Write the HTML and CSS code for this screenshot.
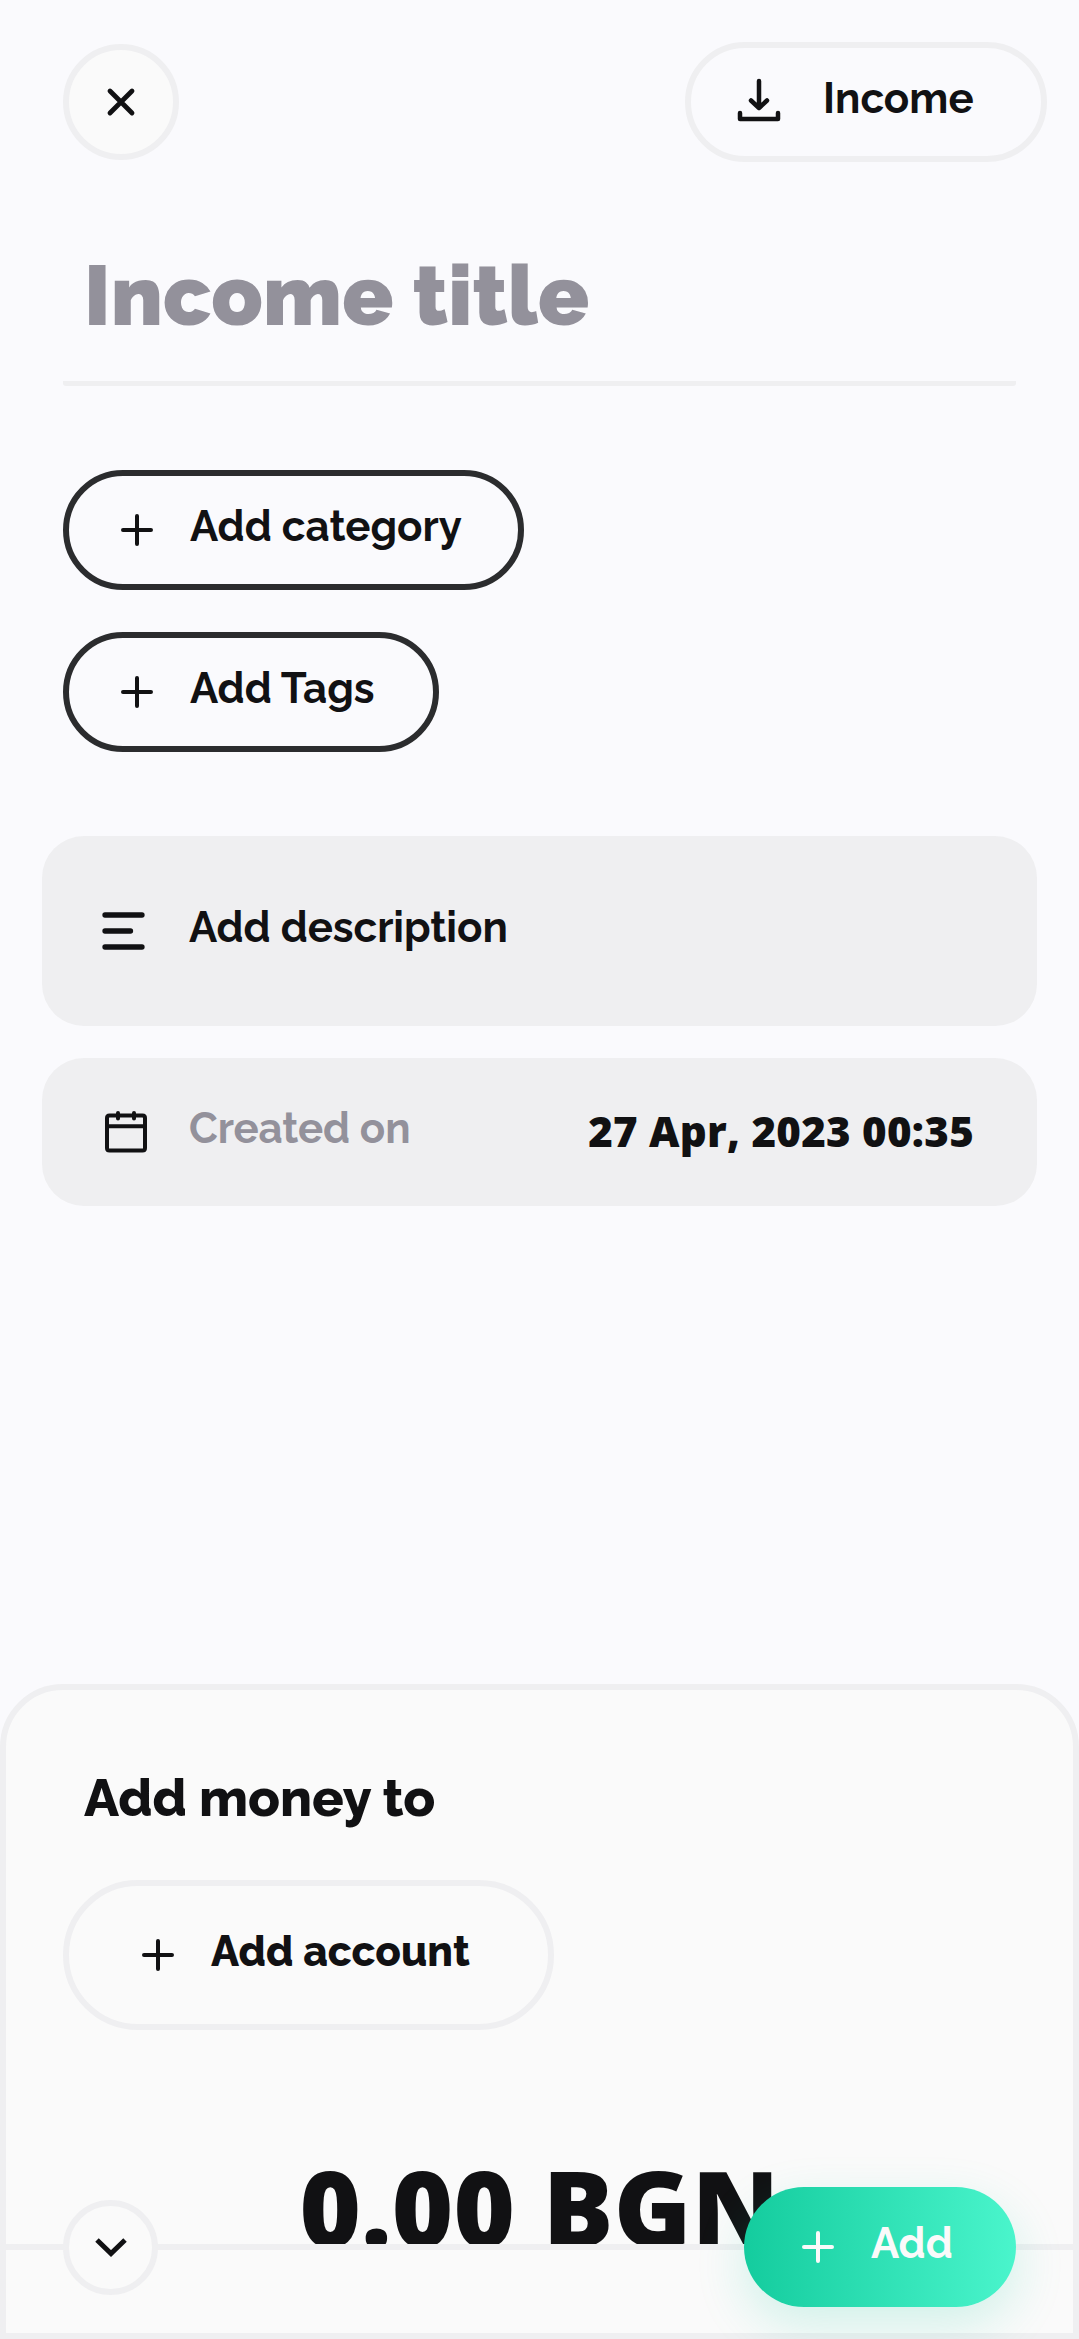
FILE: index.html
```html
<!DOCTYPE html>
<html lang="en">
<head>
<meta charset="utf-8">
<title>Income</title>
<link rel="stylesheet" href="styles.css">
</head>
<body>
<main class="screen">
  <header class="toolbar">
    <button class="round close" aria-label="Close">
      <svg width="40" height="40" viewBox="0 0 40 40"><path d="M9 9L31 31M31 9L9 31"/></svg>
    </button>
    <button class="pill type">
      <svg width="44" height="44" viewBox="0 0 44 44"><path d="M22 3V30M14 22.500L22 30L30 22.500M3 35V41H41V35"/></svg>
      <span class="label">Income</span>
    </button>
  </header>

  <h1 class="title">Income title</h1>

  <section class="chips">
    <button class="pill chip">
      <svg width="32" height="32" viewBox="0 0 32 32"><path d="M2 16H30M16 2V30"/></svg>
      <span class="label">Add category</span>
    </button>
    <button class="pill chip chip-tags">
      <svg width="32" height="32" viewBox="0 0 32 32"><path d="M2 16H30M16 2V30"/></svg>
      <span class="label">Add Tags</span>
    </button>
  </section>

  <section class="cards">
    <div class="card card-description">
      <svg class="lines" width="44" height="44" viewBox="0 0 44 44"><path d="M3 6H40M3 22H28.500M3 38H40"/></svg>
      <span class="label">Add description</span>
    </div>
    <div class="card card-date">
      <svg class="calendar" width="44" height="44" viewBox="0 0 44 44"><path d="M5.500 5.500H38.500Q41 5.500 41 8V38Q41 40.500 38.500 40.500H5.500Q3 40.500 3 38V8Q3 5.500 5.500 5.500ZM3 16.300H41M14 3V8.500M30 3V8.500"/></svg>
      <span class="label">Created on</span>
      <time class="date">27 Apr, 2023 00:35</time>
    </div>
  </section>

  <section class="sheet">
    <h2 class="sheet-title">Add money to</h2>
    <button class="pill account">
      <svg width="32" height="32" viewBox="0 0 32 32"><path d="M2 16H30M16 2V30"/></svg>
      <span class="label">Add account</span>
    </button>
    <div class="amount">0.00 BGN</div>
    <footer class="actions">
      <button class="round collapse" aria-label="Collapse">
        <svg width="32" height="22" viewBox="0 0 32 22"><path d="M2 3L16 16.500L30 3"/></svg>
      </button>
      <button class="pill add">
        <svg width="32" height="32" viewBox="0 0 32 32"><path d="M2 16H30M16 2V30"/></svg>
        <span class="label">Add</span>
      </button>
    </footer>
  </section>
</main>
</body>
</html>
```
FILE: styles.css
```css
* { box-sizing: border-box; }

body {
  margin: 0;
  background: #fafafd;
  color: #111113;
  font-family: Raleway, Lato, sans-serif;
}

.screen {
  width: 1079px;
  height: 2339px;
  display: flex;
  flex-direction: column;
  overflow: hidden;
}

button {
  margin: 0;
  padding: 0;
  background: none;
  color: inherit;
  font: inherit;
}

svg {
  display: block;
  flex: none;
  fill: none;
  stroke: currentColor;
  stroke-width: 4;
  stroke-linecap: round;
  stroke-linejoin: round;
}

.round {
  display: flex;
  align-items: center;
  justify-content: center;
  border: 6px solid #efeff1;
  border-radius: 50%;
  background: #fafafa;
}

.pill {
  display: flex;
  align-items: center;
  height: 120px;
  border: 6px solid #efeff1;
  border-radius: 60px;
}

.label {
  font-size: 42px;
  line-height: 50px;
  font-weight: 700;
  white-space: nowrap;
}

.pill .label { margin-top: -6px; }

.toolbar {
  display: flex;
  justify-content: space-between;
  padding: 42px 32px 0 63px;
}

.close { width: 116px; height: 116px; margin-top: 2px; }
.close svg { stroke-width: 4.800; }

.type { width: 362px; padding-left: 46px; gap: 42px; }
.type svg { margin-top: -4px; stroke-width: 4.500; }

.title {
  height: 224px;
  margin: 0 63px;
  padding: 84px 0 0 21px;
  border-bottom: 5px solid #efeff1;
  border-radius: 3px;
  color: #93919b;
  font-size: 84px;
  line-height: 100px;
  font-weight: 900;
  letter-spacing: 0.150px;
}

.chips {
  display: flex;
  flex-direction: column;
  gap: 42px;
  padding: 84px 63px 0;
}

.chip {
  width: 461px;
  padding-left: 52px;
  gap: 37px;
  border-color: #2b2c2e;
}

.chip-tags { width: 376px; }

.cards {
  display: flex;
  flex-direction: column;
  gap: 32px;
  padding: 84px 42px 0;
}

.card {
  display: flex;
  align-items: center;
  border-radius: 42px;
  background: #efeff1;
}

.card .label { margin-top: -6px; letter-spacing: -0.050px; }

.card-description { height: 190px; padding-left: 60px; gap: 43px; }
.lines { stroke-width: 5.300; }

.card-date { height: 148px; padding: 0 63px 0 62px; gap: 41px; }
.card-date .label { color: #93919b; letter-spacing: -0.150px; }

.date {
  margin: -2px 0 0 auto;
  font-family: "Open Sans", "Noto Sans", sans-serif;
  font-size: 42px;
  line-height: 50px;
  font-weight: 800;
  letter-spacing: 0.260px;
  white-space: nowrap;
}

.sheet {
  flex: none;
  display: flex;
  flex-direction: column;
  height: 655px;
  margin-top: auto;
  border: 6px solid #efeff1;
  border-radius: 63px 63px 0 0;
  background: #fafafa;
}

.sheet-title {
  margin: 76px 0 0 78px;
  font-size: 52.500px;
  line-height: 64px;
  font-weight: 800;
  letter-spacing: -0.080px;
}

.account {
  width: 491px;
  height: 150px;
  margin: 50px 0 0 57px;
  padding-left: 73px;
  gap: 37px;
  border-radius: 75px;
}

.account .label { font-weight: 800; }

.amount {
  height: 214px;
  padding-top: 102px;
  overflow: hidden;
  font-family: "Open Sans", "Noto Sans", sans-serif;
  font-size: 105px;
  line-height: 150px;
  font-weight: 800;
  letter-spacing: 0.200px;
  text-align: center;
  white-space: nowrap;
}

.actions {
  display: flex;
  flex: 1;
  align-items: flex-start;
  justify-content: space-between;
  padding: 0 57px;
  border-top: 6px solid #efeff1;
}

.collapse { width: 95px; height: 95px; margin-top: -50px; }
.collapse svg { stroke-width: 5; stroke-linecap: butt; stroke-linejoin: miter; }

.add {
  width: 272px;
  margin-top: -63px;
  padding-left: 58px;
  gap: 37px;
  border: 0;
  background: linear-gradient(90deg, #14cc9e, #4af5cc);
  box-shadow: 0 18px 50px rgba(20, 204, 158, 0.180);
  color: #fafafa;
}
```
